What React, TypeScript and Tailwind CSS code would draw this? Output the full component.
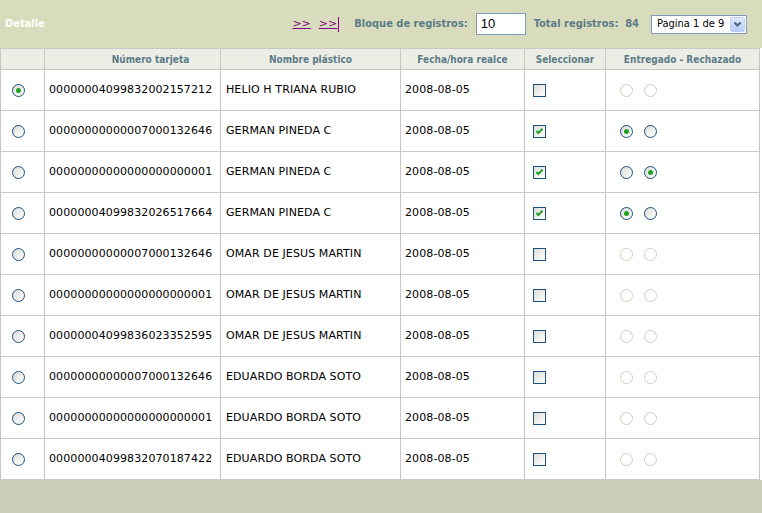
import React from "react";

interface Registro {
  tarjeta: string;
  nombre: string;
  fecha: string;
  seleccionado: boolean;
  estado: "entregado" | "rechazado" | null;
}

const registros: Registro[] = [
  { tarjeta: "00000004099832002157212", nombre: "HELIO H TRIANA RUBIO", fecha: "2008-08-05", seleccionado: false, estado: null },
  { tarjeta: "00000000000007000132646", nombre: "GERMAN PINEDA C", fecha: "2008-08-05", seleccionado: true, estado: "entregado" },
  { tarjeta: "00000000000000000000001", nombre: "GERMAN PINEDA C", fecha: "2008-08-05", seleccionado: true, estado: "rechazado" },
  { tarjeta: "00000004099832026517664", nombre: "GERMAN PINEDA C", fecha: "2008-08-05", seleccionado: true, estado: "entregado" },
  { tarjeta: "00000000000007000132646", nombre: "OMAR DE JESUS MARTIN", fecha: "2008-08-05", seleccionado: false, estado: null },
  { tarjeta: "00000000000000000000001", nombre: "OMAR DE JESUS MARTIN", fecha: "2008-08-05", seleccionado: false, estado: null },
  { tarjeta: "00000004099836023352595", nombre: "OMAR DE JESUS MARTIN", fecha: "2008-08-05", seleccionado: false, estado: null },
  { tarjeta: "00000000000007000132646", nombre: "EDUARDO BORDA SOTO", fecha: "2008-08-05", seleccionado: false, estado: null },
  { tarjeta: "00000000000000000000001", nombre: "EDUARDO BORDA SOTO", fecha: "2008-08-05", seleccionado: false, estado: null },
  { tarjeta: "00000004099832070187422", nombre: "EDUARDO BORDA SOTO", fecha: "2008-08-05", seleccionado: false, estado: null },
];

const Radio = ({ checked = false, disabled = false }: { checked?: boolean; disabled?: boolean }) => (
  <span
    className={
      disabled
        ? "inline-flex h-[13px] w-[13px] items-center justify-center rounded-full border border-[#cfcdc0] bg-white"
        : "inline-flex h-[13px] w-[13px] items-center justify-center rounded-full border border-[#1c5180] bg-gradient-to-br from-[#dcdcd7] to-white"
    }
  >
    {checked && <span className="h-[5px] w-[5px] rounded-full bg-[#21a121]" />}
  </span>
);

const Checkbox = ({ checked }: { checked: boolean }) => (
  <span className="inline-flex h-[13px] w-[13px] items-center justify-center border border-[#1c5180] bg-gradient-to-br from-[#dcdcd7] to-white">
    {checked && (
      <svg width="11" height="11" viewBox="0 0 11 11">
        <polyline points="2.5,5 4.3,7 8.5,2.8" fill="none" stroke="#21a121" strokeWidth="2" />
      </svg>
    )}
  </span>
);

const cols = "grid grid-cols-[44px_176px_180px_124px_81px_155px]";
const cell = "flex items-center border-l border-[#c8c8c8]";
const head = "font-['DejaVu_Sans_Condensed','DejaVu_Sans',sans-serif] [font-stretch:condensed] font-bold text-[10px] text-[#5b7b86]";

export default function App() {
  return (
    <div className="h-[513px] w-[762px] bg-white font-['DejaVu_Sans',sans-serif] text-[11px] text-black">
      {/* barra superior */}
      <div className="flex h-[48px] items-center bg-[#d9dcbc] pr-[15px]">
        <span className={`${head} !text-[11px] pl-[5px] !text-white`}>Detalle</span>
        <div className="ml-auto flex items-center">
          <a href="#" className="text-[11px] text-[#800080] underline">&gt;&gt;</a>
          <a href="#" className="ml-[8px] flex items-center text-[11px] text-[#800080] underline">
            &gt;&gt;<span className="ml-[1px] inline-block h-[15px] w-[1px] bg-[#800080]" />
          </a>
          <span className={`${head} !text-[11px] ml-[15px]`}>Bloque de registros:</span>
          <div className="ml-[8px] flex h-[22px] w-[50px] items-center border border-[#7f9db9] bg-white pl-[4px] font-['Liberation_Sans',sans-serif] text-[13px]">
            10
          </div>
          <span className={`${head} !text-[11px] ml-[8px]`}>Total registros:&nbsp; 84</span>
          <div className="ml-[12px] flex h-[19px] w-[96px] items-center border border-[#7f9db9] bg-white pl-[5px] font-['DejaVu_Sans_Condensed','DejaVu_Sans',sans-serif] [font-stretch:condensed] text-[11px]">
            Pagina 1 de 9
            <span className="ml-auto mr-[1px] flex h-[15px] w-[15px] items-center justify-center rounded-[2px] border border-[#b9cdf5] bg-gradient-to-b from-[#dfe8fd] to-[#b6cbf8]">
              <svg width="9" height="7" viewBox="0 0 9 7">
                <polyline points="1.5,1.5 4.5,4.5 7.5,1.5" fill="none" stroke="#4d6185" strokeWidth="2" />
              </svg>
            </span>
          </div>
        </div>
      </div>

      {/* tabla */}
      <div className="w-[760px]">
        <div className={`${cols} h-[22px] border-y border-[#c8c8c8] bg-[#eceee6] ${head}`}>
          <div className={cell} />
          <div className={`${cell} justify-center pl-[36px]`}>Número tarjeta</div>
          <div className={`${cell} justify-center`}>Nombre plástico</div>
          <div className={`${cell} justify-center`}>Fecha/hora realce</div>
          <div className={`${cell} justify-center`}>Seleccionar</div>
          <div className={`${cell} justify-center border-r`}>Entregado - Rechazado</div>
        </div>
        {registros.map((r, i) => (
          <div key={i} className={`${cols} h-[41px] border-b border-[#c8c8c8]`}>
            <div className={`${cell} pl-[11px]`}>
              <Radio checked={i === 0} />
            </div>
            <div className={`${cell} pl-[4px] pt-[1px] tracking-[0.1px]`}>{r.tarjeta}</div>
            <div className={`${cell} pl-[5px] pt-[1px] tracking-[0.1px]`}>{r.nombre}</div>
            <div className={`${cell} pl-[4px] pt-[1px] tracking-[0.1px]`}>{r.fecha}</div>
            <div className={`${cell} pl-[8px]`}>
              <Checkbox checked={r.seleccionado} />
            </div>
            <div className={`${cell} gap-[11px] border-r pl-[14px]`}>
              <Radio checked={r.estado === "entregado"} disabled={r.estado === null} />
              <Radio checked={r.estado === "rechazado"} disabled={r.estado === null} />
            </div>
          </div>
        ))}
      </div>

      {/* pie */}
      <div className="h-[33px] bg-[#cbcdb8]" />
    </div>
  );
}
